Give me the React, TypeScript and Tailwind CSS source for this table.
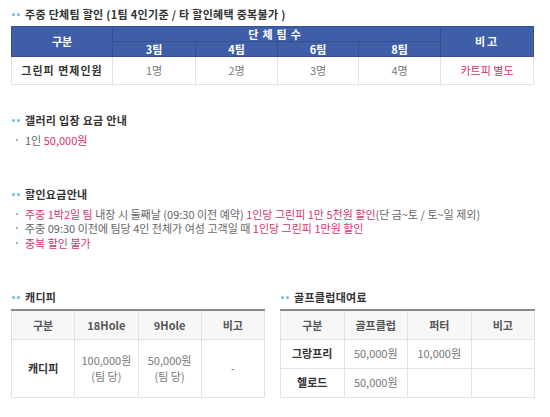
const font = { fontFamily: '"Noto Sans CJK KR", "Noto Sans", sans-serif' };

const Title = ({ children }: { children: React.ReactNode }) => (
  <div className="flex items-center h-[16px] text-[11px] font-bold text-[#333] tracking-[0.3px]">
    <span className="w-[14px] flex items-center gap-[2px] pl-[1px]">
      <span className="w-[3px] h-[3px] rounded-full bg-[#6dbbe8]" />
      <span className="w-[3px] h-[3px] rounded-full bg-[#6dbbe8]" />
    </span>
    {children}
  </div>
);

const Item = ({ children }: { children: React.ReactNode }) => (
  <li className="flex items-center h-[14.5px] text-[11px] text-[#666]">
    <span className="w-[14px] pl-[5px] flex items-center">
      <span className="w-[2px] h-[2px] rounded-full bg-[#999]" />
    </span>
    <span>{children}</span>
  </li>
);

const Pink = ({ children }: { children: React.ReactNode }) => (
  <span className="text-[#d6336c]">{children}</span>
);

const th = "border border-[#e2e2e2] bg-[#f7f7f8] font-bold text-[#555] h-[29px]";
const td = "border border-[#e2e2e2] text-[#777]";

export default function App() {
  return (
    <div className="w-[550px] h-[417px] bg-white pl-[11px] pt-[6px] overflow-hidden" style={font}>
      <Title>주중 단체팀 할인 (1팀 4인기준 / 타 할인혜택 중복불가 )</Title>

      <table className="mt-[4px] w-[522px] border-collapse table-fixed text-[11px] text-center">
        <colgroup>
          <col className="w-[101px]" />
          <col className="w-[83px]" />
          <col className="w-[82px]" />
          <col className="w-[81px]" />
          <col className="w-[82px]" />
          <col className="w-[93px]" />
        </colgroup>
        <thead>
          <tr className="bg-[#3f5ea8] text-white font-bold h-[15px]">
            <th rowSpan={2} className="border border-[#34508f]">구분</th>
            <th colSpan={4} className="border border-[#34508f] leading-[14px] tracking-[4px]">단체팀수</th>
            <th rowSpan={2} className="border border-[#34508f] tracking-[2px]">비고</th>
          </tr>
          <tr className="bg-[#3f5ea8] text-white font-bold h-[15px] leading-[14px]">
            <th className="border border-[#34508f]">3팀</th>
            <th className="border border-[#34508f]">4팀</th>
            <th className="border border-[#34508f]">6팀</th>
            <th className="border border-[#34508f]">8팀</th>
          </tr>
        </thead>
        <tbody>
          <tr className="h-[28px]">
            <td className="border border-[#e2e2e2] font-bold text-[#333] tracking-[1px]">그린피 면제인원</td>
            <td className={td}>1명</td>
            <td className={td}>2명</td>
            <td className={td}>3명</td>
            <td className={td}>4명</td>
            <td className="border border-[#e2e2e2] text-[#d6336c]">카트피 별도</td>
          </tr>
        </tbody>
      </table>

      <div className="mt-[27px]">
        <Title>갤러리 입장 요금 안내</Title>
        <ul className="mt-[5px]">
          <Item>
            1인 <Pink>50,000원</Pink>
          </Item>
        </ul>
      </div>

      <div className="mt-[39px]">
        <Title>할인요금안내</Title>
        <ul className="mt-[4px]">
          <Item>
            <Pink>주중 1박2일 팀</Pink> 내장 시 둘째날 (09:30 이전 예약) <Pink>1인당 그린피 1만 5천원 할인</Pink>(단 금~토 / 토~일 제외)
          </Item>
          <Item>
            주중 09:30 이전에 팀당 4인 전체가 여성 고객일 때 <Pink>1인당 그린피 1만원 할인</Pink>
          </Item>
          <Item>
            <Pink>중복 할인 불가</Pink>
          </Item>
        </ul>
      </div>

      <div className="mt-[39px] flex gap-[15px]">
        <div className="w-[254px]">
          <Title>캐디피</Title>
          <table className="mt-[4px] w-full border-collapse table-fixed text-[11px] text-center border-t-2 border-t-[#8a8a8a]">
            <thead>
              <tr>
                <th className={th}>구분</th>
                <th className={th}>18Hole</th>
                <th className={th}>9Hole</th>
                <th className={th}>비고</th>
              </tr>
            </thead>
            <tbody>
              <tr className="h-[58px]">
                <td className="border border-[#e2e2e2] font-bold text-[#333]">캐디피</td>
                <td className={td}>
                  100,000원
                  <br />
                  (팀 당)
                </td>
                <td className={td}>
                  50,000원
                  <br />
                  (팀 당)
                </td>
                <td className={td}>-</td>
              </tr>
            </tbody>
          </table>
        </div>

        <div className="w-[255px]">
          <Title>골프클럽대여료</Title>
          <table className="mt-[4px] w-full border-collapse table-fixed text-[11px] text-center border-t-2 border-t-[#8a8a8a]">
            <thead>
              <tr>
                <th className={th}>구분</th>
                <th className={th}>골프클럽</th>
                <th className={th}>퍼터</th>
                <th className={th}>비고</th>
              </tr>
            </thead>
            <tbody>
              <tr className="h-[29px]">
                <td className="border border-[#e2e2e2] font-bold text-[#333]">그랑프리</td>
                <td className={td}>50,000원</td>
                <td className={td}>10,000원</td>
                <td className={td}></td>
              </tr>
              <tr className="h-[29px]">
                <td className="border border-[#e2e2e2] font-bold text-[#333]">헬로드</td>
                <td className={td}>50,000원</td>
                <td className={td}></td>
                <td className={td}></td>
              </tr>
            </tbody>
          </table>
        </div>
      </div>
    </div>
  );
}
